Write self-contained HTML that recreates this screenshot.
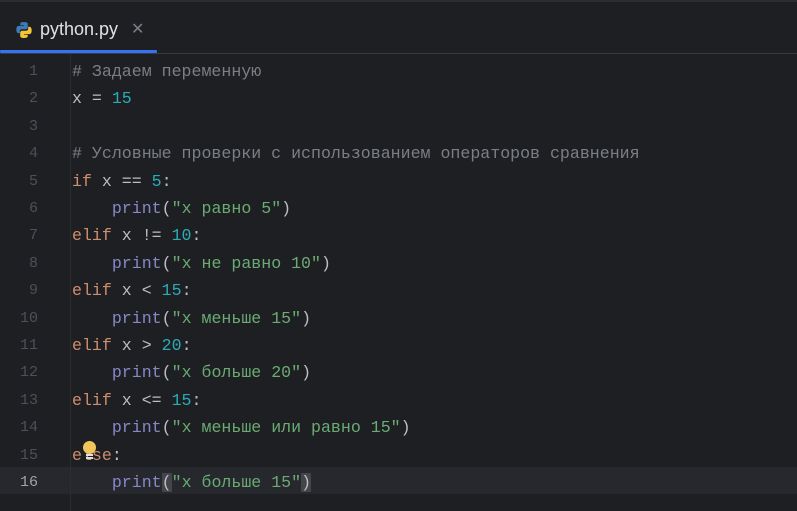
<!DOCTYPE html>
<html><head><meta charset="utf-8"><style>
body{margin:0;width:797px;height:511px;background:#1e1f22;overflow:hidden;position:relative;font-family:"Liberation Mono","DejaVu Sans Mono",monospace}
.top{position:absolute;left:0;top:0;width:797px;height:2px;background:#2e2c33}
.tabbar{position:absolute;left:0;top:2px;width:797px;height:51px;background:#1e1f22;border-bottom:1px solid #393b40}
.tab{position:absolute;left:40px;top:17px;font-family:"Liberation Sans","DejaVu Sans",sans-serif;font-size:18px;color:#dfe1e5}
.x{position:absolute;left:131px;top:17px;color:#7a7e85;font-family:"Liberation Sans",sans-serif;font-size:16px}
.ul{position:absolute;left:0;top:50px;width:157px;height:3px;background:#3574f0;border-radius:1px}
.gutsep{position:absolute;left:70px;top:54px;width:1px;height:457px;background:#2b2d30}
.cur{position:absolute;left:0;top:467px;width:797px;height:27px;background:#26282e}
.ln{position:absolute;width:38px;text-align:right;left:0;font-size:15px;color:#4b5059}
.code{position:absolute;left:72px;font-size:16.6px;color:#bcbec4;white-space:pre}
.c{color:#7a7e85}.k{color:#cf8e6d}.n{color:#2aacb8}.s{color:#6aab73}.p{color:#8888c6}
.br{background:#43454a}
</style></head><body>
<div class="top"></div>
<div class="tabbar">
<svg style="position:absolute;left:15px;top:19px" width="18" height="18" viewBox="0 0 18 18">
<path d="M8.8 1C5 1 5.3 2.6 5.3 2.6V4.3h3.6v.6H3.8S1.3 4.6 1.3 8.5s2.2 3.8 2.2 3.8h1.3v-1.8s-.1-2.2 2.2-2.2h3.7s2.1 0 2.1-2V2.9S13.1 1 8.8 1z" fill="#3d7ab8"/>
<path d="M9.2 17c3.8 0 3.5-1.6 3.5-1.6v-1.700H9.1v-.6h5.1s2.5.3 2.5-3.6-2.2-3.8-2.2-3.8h-1.3v1.8s.1 2.2-2.2 2.2H7.3s-2.1 0-2.1 2v3.4S4.9 17 9.2 17z" fill="#f5c43b"/>
</svg>
<div class="tab">python.py</div>
<div class="x">✕</div>
</div>
<div class="ul"></div>
<div class="cur"></div>
<div class="gutsep"></div>
<div class="ln" style="top:63px">1</div>
<div class="ln" style="top:90px">2</div>
<div class="ln" style="top:118px">3</div>
<div class="ln" style="top:145px">4</div>
<div class="ln" style="top:173px">5</div>
<div class="ln" style="top:200px">6</div>
<div class="ln" style="top:227px">7</div>
<div class="ln" style="top:255px">8</div>
<div class="ln" style="top:282px">9</div>
<div class="ln" style="top:310px">10</div>
<div class="ln" style="top:337px">11</div>
<div class="ln" style="top:364px">12</div>
<div class="ln" style="top:392px">13</div>
<div class="ln" style="top:419px">14</div>
<div class="ln" style="top:447px">15</div>
<div class="ln" style="top:474px;color:#a1a3ab">16</div>
<div class="code" style="top:62px"><span class="c"># Задаем переменную</span></div>
<div class="code" style="top:89px">x = <span class="n">15</span></div>
<div class="code" style="top:144px"><span class="c"># Условные проверки с использованием операторов сравнения</span></div>
<div class="code" style="top:172px"><span class="k">if</span> x == <span class="n">5</span>:</div>
<div class="code" style="top:199px">    <span class="p">print</span>(<span class="s">"x равно 5"</span>)</div>
<div class="code" style="top:226px"><span class="k">elif</span> x != <span class="n">10</span>:</div>
<div class="code" style="top:254px">    <span class="p">print</span>(<span class="s">"x не равно 10"</span>)</div>
<div class="code" style="top:281px"><span class="k">elif</span> x &lt; <span class="n">15</span>:</div>
<div class="code" style="top:309px">    <span class="p">print</span>(<span class="s">"x меньше 15"</span>)</div>
<div class="code" style="top:336px"><span class="k">elif</span> x &gt; <span class="n">20</span>:</div>
<div class="code" style="top:363px">    <span class="p">print</span>(<span class="s">"x больше 20"</span>)</div>
<div class="code" style="top:391px"><span class="k">elif</span> x &lt;= <span class="n">15</span>:</div>
<div class="code" style="top:418px">    <span class="p">print</span>(<span class="s">"x меньше или равно 15"</span>)</div>
<div class="code" style="top:446px"><span class="k">else</span>:</div>
<div class="code" style="top:473px">    <span class="p">print</span><span class="br">(</span><span class="s">"x больше 15"</span><span class="br">)</span></div>
<div style="position:absolute;left:83px;top:441px;width:13px;height:13px;border-radius:50%;background:#f2c55c"></div>
<div style="position:absolute;left:86px;top:454px;width:7px;height:2px;background:#dfe1e5"></div>
<div style="position:absolute;left:86px;top:457px;width:7px;height:2px;background:#dfe1e5"></div>
</body></html>
